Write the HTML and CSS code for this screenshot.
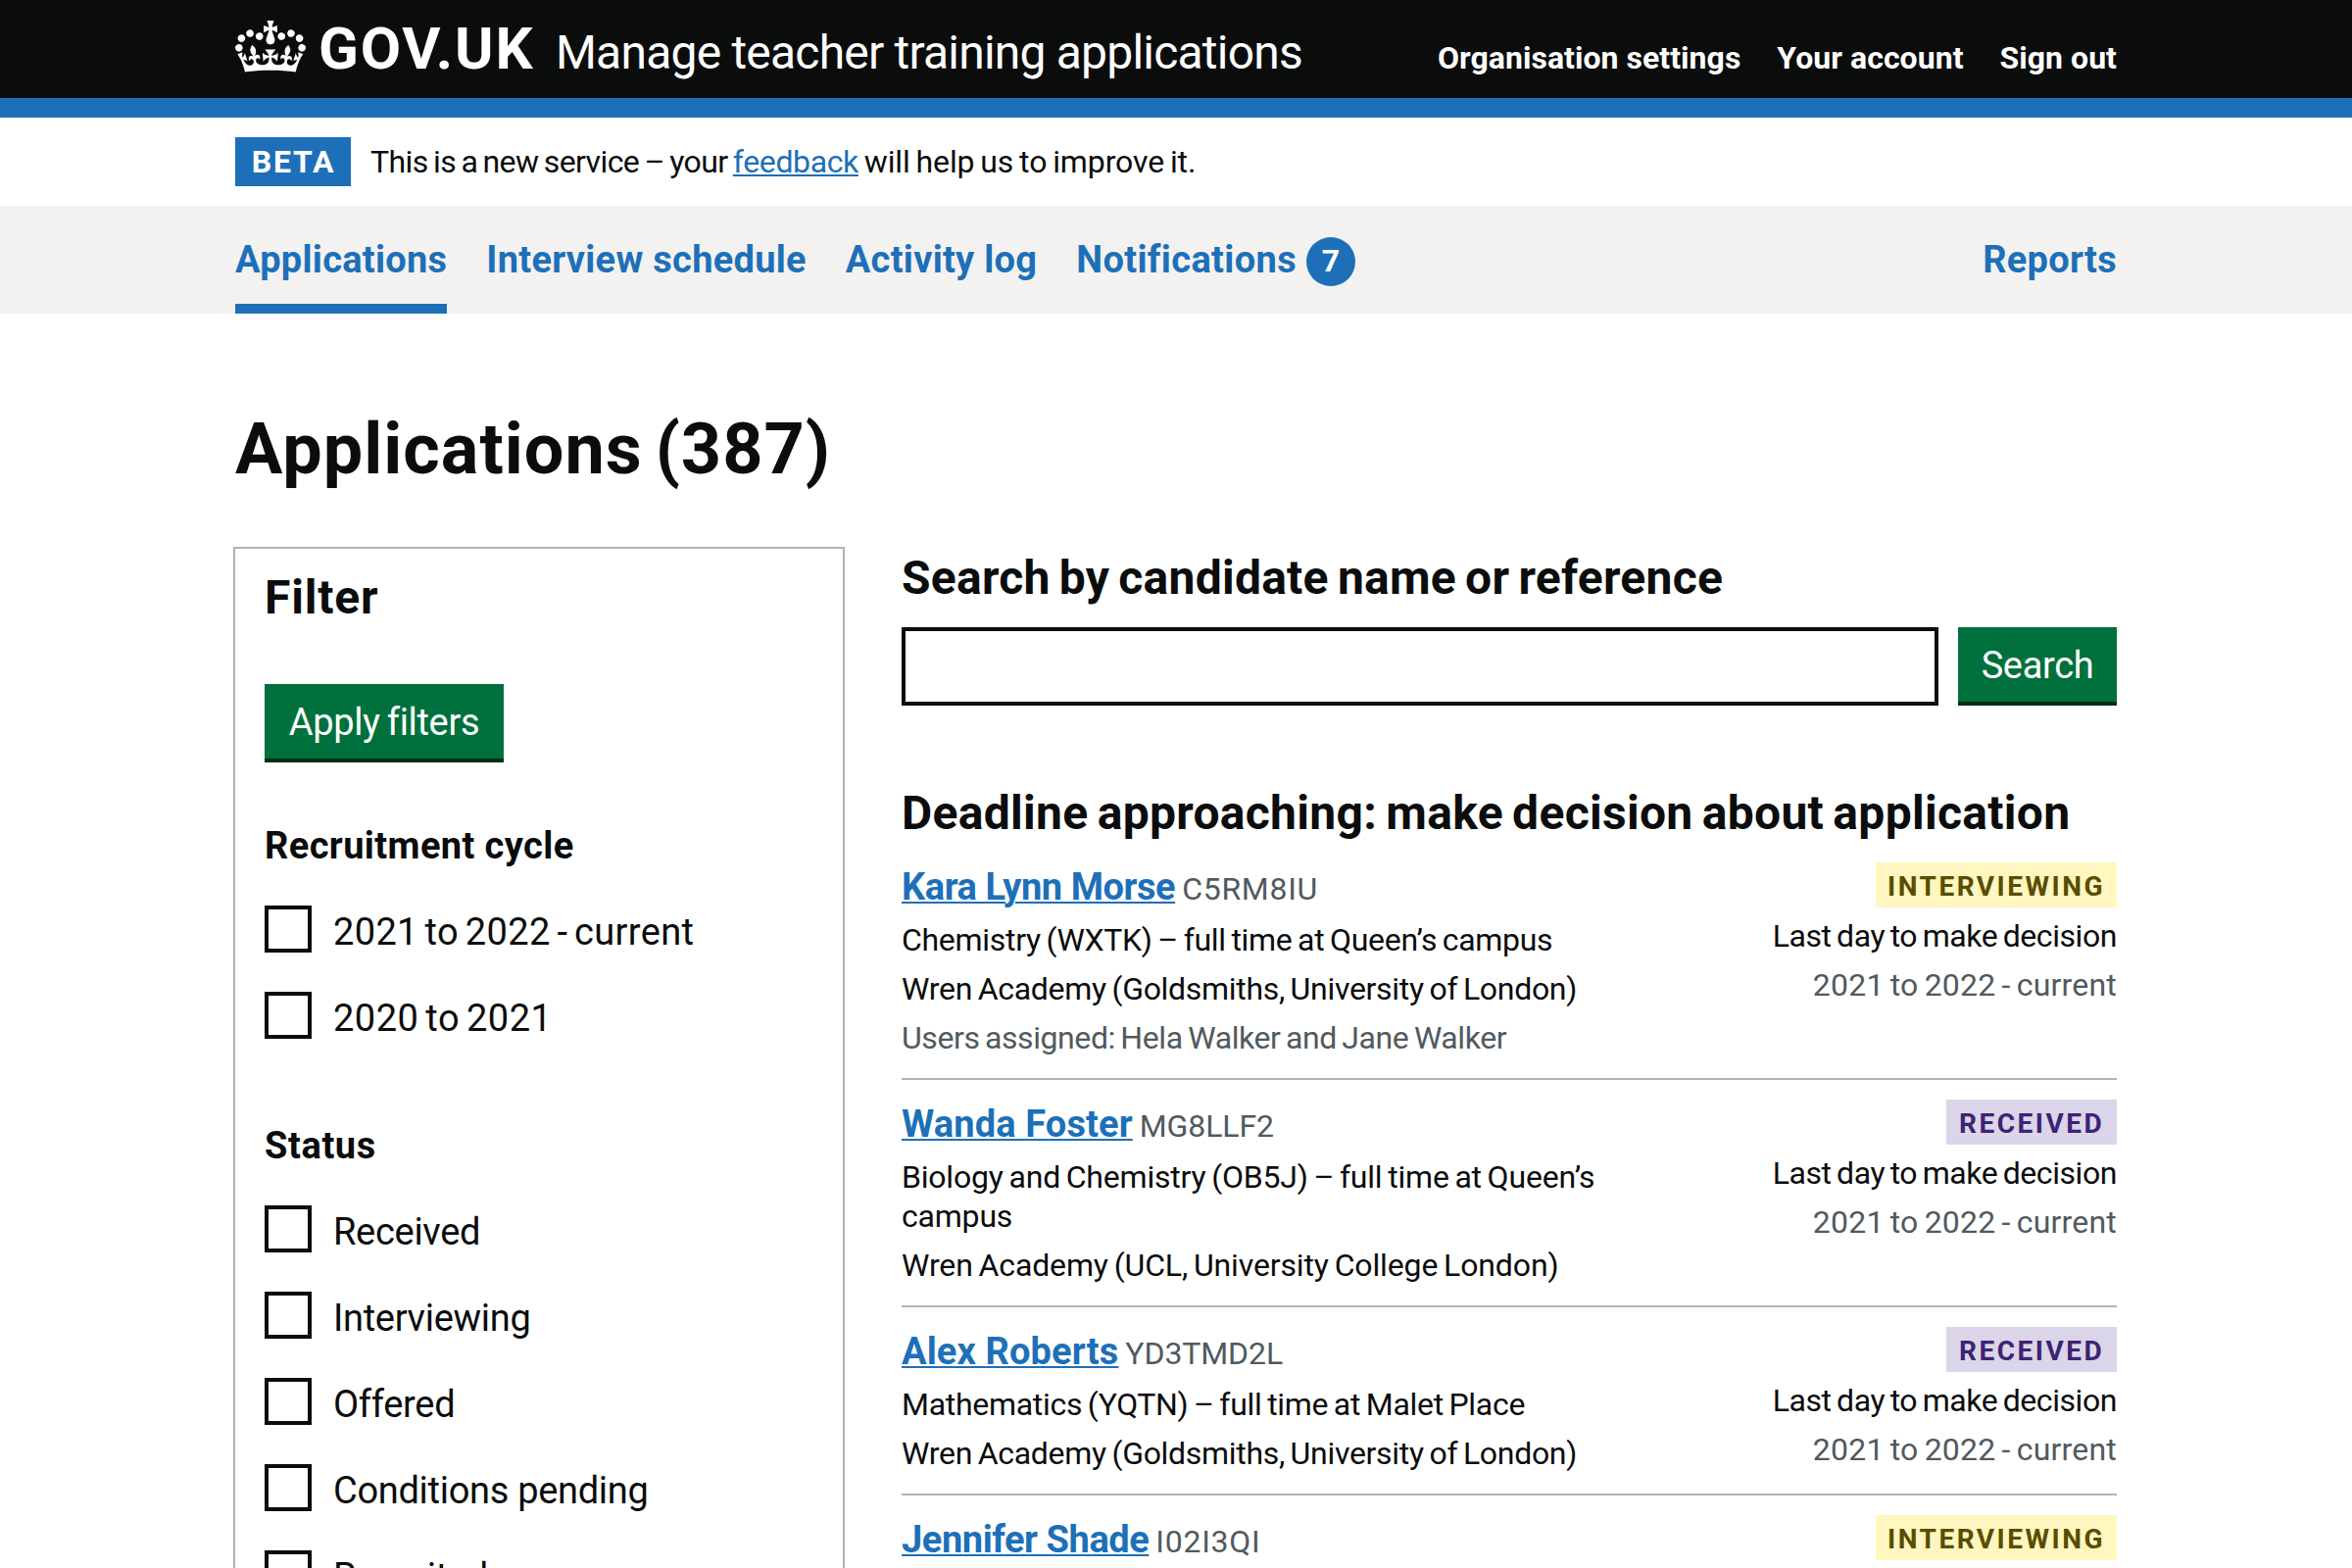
FILE: index.html
```html
<!DOCTYPE html>
<html lang="en">
<head>
<meta charset="utf-8">
<title>Applications (387) - Manage teacher training applications - GOV.UK</title>
<link rel="stylesheet" href="styles.css">
</head>
<body>
<header class="header">
  <div class="container header-inner">
    <a class="logo" href="#">
      <svg class="crown" viewBox="0 0 132 97" aria-hidden="true"><path fill="currentColor" fill-rule="evenodd" d="M25 30.2c3.5 1.5 7.7-.2 9.1-3.7 1.5-3.6-.2-7.8-3.9-9.2-3.6-1.4-7.6.3-9.1 3.9-1.4 3.5.3 7.5 3.9 9zM9 39.5c3.6 1.5 7.8-.2 9.2-3.7 1.5-3.6-.2-7.8-3.9-9.1-3.6-1.5-7.6.2-9.1 3.8-1.4 3.5.3 7.5 3.8 9zM4.4 57.2c3.5 1.5 7.7-.2 9.1-3.8 1.5-3.6-.2-7.7-3.9-9.1-3.5-1.5-7.6.3-9.1 3.8-1.4 3.5.3 7.6 3.9 9.1zm38.3-21.4c3.5 1.5 7.7-.2 9.1-3.8 1.5-3.6-.2-7.7-3.9-9.1-3.6-1.5-7.6.3-9.1 3.8-1.3 3.6.4 7.7 3.9 9.1zm64.4-5.6c-3.6 1.5-7.8-.2-9.1-3.7-1.5-3.6.2-7.8 3.8-9.2 3.6-1.4 7.7.3 9.2 3.9 1.3 3.5-.4 7.5-3.9 9zm15.9 9.3c-3.6 1.5-7.7-.2-9.1-3.7-1.5-3.6.2-7.8 3.7-9.1 3.6-1.5 7.7.2 9.2 3.8 1.5 3.5-.3 7.5-3.8 9zm4.7 17.7c-3.6 1.5-7.8-.2-9.2-3.8-1.5-3.6.2-7.7 3.9-9.1 3.6-1.5 7.7.3 9.2 3.8 1.3 3.5-.4 7.6-3.9 9.1zM89.3 35.8c-3.6 1.5-7.8-.2-9.2-3.8-1.4-3.6.2-7.7 3.9-9.1 3.6-1.5 7.7.3 9.2 3.8 1.4 3.6-.3 7.7-3.9 9.1zM69.7 17.7l8.9 4.7V9.3l-8.9 2.8c-.2-.3-.5-.6-.9-.9L72.4 0H59.6l3.5 11.2c-.3.3-.6.5-.9.9l-8.8-2.8v13.1l8.8-4.7c.3.3.6.7.9.9l-5 15.4v.1c-.2.8-.4 1.6-.4 2.4 0 4.1 3.1 7.5 7 8.1h.2c.3 0 .7.1 1 .1.4 0 .7 0 1-.1h.2c4-.6 7.1-4.1 7.1-8.1 0-.8-.1-1.7-.4-2.4V34l-5.1-15.4c.4-.2.7-.6 1-.9zM66 92.8c16.9 0 32.8 1.1 47.1 3.2 4-16.9 8.9-26.7 14-33.5l-9.6-3.4c1 4.9 1.1 7.2 0 10.2-1.5-1.4-3-4.3-4.2-8.7L108.6 76c2.8-2 5-3.2 7.5-3.3-4.4 9.4-10 11.9-13.6 11.2-4.3-.8-6.3-4.6-5.6-7.9 1-4.7 5.7-5.9 8-.5 4.3-8.7-3-11.4-7.6-8.8 7.1-7.2 7.9-13.5 2.1-21.1-8 6.1-8.1 12.3-4.5 20.8-4.7-5.4-12.1-2.5-9.5 6.2 3.4-5.2 7.9-2 7.2 3.1-.6 4.3-6.4 7.8-13.5 7.2-10.3-.9-10.9-8-11.2-13.8 2.5-.5 7.1 1.8 11 7.3L80.2 60c-4.1 4.4-8 5.3-12.3 5.4 1.4-4.4 8-11.6 8-11.6H55.5s6.4 7.2 7.9 11.6c-4.2-.1-8-1-12.3-5.4l1.4 16.4c3.9-5.5 8.5-7.7 10.9-7.3-.3 5.8-.9 12.8-11.1 13.8-7.2.6-12.9-2.9-13.5-7.2-.7-5 3.8-8.3 7.1-3.1 2.7-8.7-4.6-11.6-9.4-6.2 3.7-8.5 3.6-14.7-4.6-20.8-5.8 7.6-5 13.9 2.2 21.1-4.7-2.6-11.9.1-7.7 8.8 2.3-5.5 7.1-4.2 8.1.5.7 3.3-1.3 7.1-5.7 7.9-3.5.7-9-1.8-13.5-11.2 2.5.1 4.7 1.3 7.5 3.3l-4.7-15.4c-1.2 4.4-2.7 7.2-4.3 8.7-1.1-3-.9-5.3 0-10.2l-9.5 3.4c5 6.9 9.9 16.7 14 33.5 14.8-2.1 30.8-3.2 47.7-3.2z"/></svg>
      <span class="logo-text">GOV.UK</span>
    </a>
    <a class="service-name" href="#">Manage teacher training applications</a>
    <nav class="account-nav">
      <a href="#">Organisation settings</a>
      <a href="#">Your account</a>
      <a href="#">Sign out</a>
    </nav>
  </div>
</header>

<div class="container phase-banner">
  <strong class="phase-tag">BETA</strong>
  <p class="phase-text"><span class="phase-lead">This is a new service – your </span><a class="link phase-link" href="#">feedback</a><span class="phase-tail"> will help us to improve it.</span></p>
</div>

<div class="primary-nav">
  <nav class="container primary-nav-inner">
    <a class="nav-item nav-item-current" href="#">Applications</a>
    <a class="nav-item" href="#">Interview schedule</a>
    <a class="nav-item" href="#">Activity log</a>
    <a class="nav-item nav-item-counted" href="#">Notifications <span class="count">7</span></a>
    <a class="nav-item nav-item-end" href="#">Reports</a>
  </nav>
</div>

<main class="container main">
  <h1 class="page-title">Applications (387)</h1>
  <div class="columns">
    <form class="filter">
      <h2 class="heading-m filter-title">Filter</h2>
      <button class="button button-apply" type="button">Apply filters</button>
      <fieldset class="group">
        <legend class="group-title">Recruitment cycle</legend>
        <label class="option option-cycle"><span class="box"></span><span class="option-text">2021 to 2022 - current</span></label>
        <label class="option option-past"><span class="box"></span><span class="option-text">2020 to 2021</span></label>
      </fieldset>
      <fieldset class="group">
        <legend class="group-title group-title-status">Status</legend>
        <label class="option"><span class="box"></span><span class="option-text">Received</span></label>
        <label class="option"><span class="box"></span><span class="option-text">Interviewing</span></label>
        <label class="option"><span class="box"></span><span class="option-text">Offered</span></label>
        <label class="option"><span class="box"></span><span class="option-text">Conditions pending</span></label>
        <label class="option"><span class="box"></span><span class="option-text">Recruited</span></label>
      </fieldset>
    </form>

    <div class="results">
      <label class="heading-m search-label" for="search">Search by candidate name or reference</label>
      <div class="search-row">
        <input class="search-input" id="search" type="text">
        <button class="button button-search" type="button">Search</button>
      </div>
      <h2 class="heading-m results-title">Deadline approaching: make decision about application</h2>

      <article class="card">
        <div class="card-main">
          <h3 class="card-title"><a class="link name-tight" href="#">Kara Lynn Morse</a><span class="ref ref-wide">C5RM8IU</span></h3>
          <p>Chemistry (WXTK) – full time at Queen’s campus</p>
          <p>Wren Academy (Goldsmiths, University of London)</p>
          <p class="secondary assigned">Users assigned: Hela Walker and Jane Walker</p>
        </div>
        <div class="card-side">
          <strong class="tag tag-yellow">INTERVIEWING</strong>
          <p class="deadline">Last day to make decision</p>
          <p class="secondary cycle">2021 to 2022 - current</p>
        </div>
      </article>

      <article class="card">
        <div class="card-main">
          <h3 class="card-title"><a class="link" href="#">Wanda Foster</a><span class="ref">MG8LLF2</span></h3>
          <p class="course-long">Biology and Chemistry (OB5J) – full time at Queen’s campus</p>
          <p class="provider-ucl">Wren Academy (UCL, University College London)</p>
        </div>
        <div class="card-side">
          <strong class="tag tag-purple">RECEIVED</strong>
          <p class="deadline">Last day to make decision</p>
          <p class="secondary cycle">2021 to 2022 - current</p>
        </div>
      </article>

      <article class="card">
        <div class="card-main">
          <h3 class="card-title"><a class="link" href="#">Alex Roberts</a><span class="ref">YD3TMD2L</span></h3>
          <p>Mathematics (YQTN) – full time at Malet Place</p>
          <p>Wren Academy (Goldsmiths, University of London)</p>
        </div>
        <div class="card-side">
          <strong class="tag tag-purple">RECEIVED</strong>
          <p class="deadline">Last day to make decision</p>
          <p class="secondary cycle">2021 to 2022 - current</p>
        </div>
      </article>

      <article class="card">
        <div class="card-main">
          <h3 class="card-title"><a class="link name-tight" href="#">Jennifer Shade</a><span class="ref ref-wide">I02I3QI</span></h3>
        </div>
        <div class="card-side">
          <strong class="tag tag-yellow">INTERVIEWING</strong>
        </div>
      </article>
    </div>
  </div>
</main>
</body>
</html>
```
FILE: styles.css
```css
*, *::before, *::after { box-sizing: border-box; }

body {
  display: flex;
  flex-direction: column;
  height: 1600px;
  margin: 0;
  overflow: hidden;
  background: #fff;
  color: #0b0c0c;
  font: 400 32px/40px Roboto, "Liberation Sans", sans-serif;
}

h1, h2, h3, p, fieldset, legend { margin: 0; padding: 0; border: 0; }
a { color: inherit; text-decoration: none; }

.container { width: 1920px; margin: 0 auto; }

.link {
  color: #1d70b8;
  text-decoration: underline;
  text-decoration-thickness: 2px;
  text-underline-offset: 2px;
}

/* Header */
.header { flex: none; background: #0b0c0c; border-bottom: 20px solid #1d70b8; color: #fff; }
.header-inner { display: flex; align-items: flex-start; height: 100px; white-space: nowrap; }
.logo { display: flex; gap: 13px; width: 327px; }
.crown { width: 72px; height: 53px; margin-top: 21px; flex: none; }
.logo-text { margin-top: 20px; font-size: 60px; font-weight: 700; line-height: 60px; letter-spacing: 1.8px; }
.service-name { margin-top: 24px; font-size: 48px; line-height: 60px; letter-spacing: -.79px; }
.account-nav { display: flex; gap: 37px; margin: 39px 0 0 auto; font-weight: 700; letter-spacing: .04px; }

/* Phase banner */
.phase-banner { display: flex; flex: none; align-items: center; gap: 20px; height: 90px; }
.phase-tag {
  width: 118px;
  background: #1d70b8;
  color: #fff;
  line-height: 50px;
  letter-spacing: 1.8px;
  text-align: center;
  text-indent: 1px;
}
.phase-text { white-space: pre; word-spacing: -2px; }
.phase-lead { letter-spacing: -.6px; }
.phase-link { letter-spacing: -.38px; }
.phase-tail { letter-spacing: -.1px; }

/* Primary navigation */
.primary-nav { flex: none; background: #f3f2f1; color: #1d70b8; }
.primary-nav-inner { display: flex; gap: 40px; height: 110px; }
.nav-item { font-size: 38px; font-weight: 700; line-height: 110px; letter-spacing: .27px; white-space: nowrap; }
.nav-item-current { box-shadow: inset 0 -10px #1d70b8; }
.nav-item-counted { display: flex; align-items: center; gap: 10px; letter-spacing: .36px; }
.nav-item-end { margin-left: auto; }
.count {
  width: 50px;
  height: 50px;
  margin-top: 4px;
  border-radius: 50%;
  background: #1d70b8;
  color: #fff;
  font-size: 32px;
  line-height: 49px;
  text-align: center;
}

/* Page */
.main { flex: 1; min-height: 0; padding-top: 99px; overflow: hidden; padding-left: 2px; width: 1922px; margin-left: 238px; }
.page-title { margin-bottom: 59px; font-size: 72px; line-height: 80px; letter-spacing: 1px; word-spacing: -6px; }
.heading-m { display: block; font-size: 48px; font-weight: 700; line-height: 60px; word-spacing: -3px; }
.columns { display: grid; grid-template-columns: 624px 1240px; column-gap: 58px; margin-left: -2px; }

.button {
  height: 80px;
  padding: 1px 0 0;
  border: 0;
  border-bottom: 4px solid #002d18;
  background: #00703c;
  color: #fff;
  font: 400 38px/76px Roboto, "Liberation Sans", sans-serif;
  letter-spacing: -.34px;
  word-spacing: -2px;
}

/* Filter panel */
.filter { padding: 20px 30px 40px; border: 2px solid #b1b4b6; }
.filter-title { margin-bottom: 58px; letter-spacing: .8px; }
.button-apply { display: block; width: 244px; margin-bottom: 60px; }
.group { display: flex; flex-direction: column; gap: 40px; margin-bottom: 84px; font-size: 38px; }
.group-title { margin-bottom: 36px; font-weight: 700; line-height: 50px; letter-spacing: .4px; }
.group-title-status { letter-spacing: .6px; }
.option { display: flex; gap: 22px; height: 48px; letter-spacing: -.3px; }
.option-cycle { letter-spacing: .35px; word-spacing: -3px; }
.option-past { letter-spacing: .5px; word-spacing: -3px; }
.box { width: 48px; height: 48px; border: 4px solid #0b0c0c; }
.option-text { padding-top: 3px; line-height: 48px; }

/* Search */
.results { padding-top: 2px; }
.search-label { margin-bottom: 20px; letter-spacing: .24px; }
.search-row { display: flex; gap: 20px; margin-bottom: 80px; }
.search-input { flex: 1; height: 80px; border: 4px solid #0b0c0c; border-radius: 0; background: #fff; }
.button-search { width: 162px; }
.results-title { letter-spacing: .3px; }

/* Application cards */
.card { display: flex; justify-content: space-between; padding: 20px 0 21px; }
.card + .card { border-top: 2px solid #b1b4b6; }
.card-main, .card-side { display: flex; flex-direction: column; gap: 10px; word-spacing: -2px; letter-spacing: -.3px; }
.card-main { width: 744px; }
.card-side { align-items: flex-end; white-space: nowrap; }
.card-title { display: flex; align-items: baseline; gap: 7px; height: 49px; font-size: 38px; line-height: 50px; letter-spacing: .13px; word-spacing: 0; }
.name-tight { letter-spacing: -.43px; }
.ref { color: #505a5f; font-size: 32px; font-weight: 400; letter-spacing: -.1px; }
.ref-wide { letter-spacing: .7px; }
.secondary { color: #505a5f; }
.assigned { letter-spacing: -.42px; }
.course-long { letter-spacing: -.2px; }
.provider-ucl { letter-spacing: -.13px; }
.deadline { letter-spacing: -.44px; }
.cycle { letter-spacing: .2px; }

.tag {
  height: 46px;
  margin-bottom: -1px;
  padding: 3px 12px 0;
  font-size: 28px;
  line-height: 43px;
  letter-spacing: 2.5px;
}
.tag-yellow { width: 246px; background: #fff7bf; color: #594d00; }
.tag-purple { width: 174px; padding-left: 13px; background: #dbd5e9; color: #3d2375; }
```
